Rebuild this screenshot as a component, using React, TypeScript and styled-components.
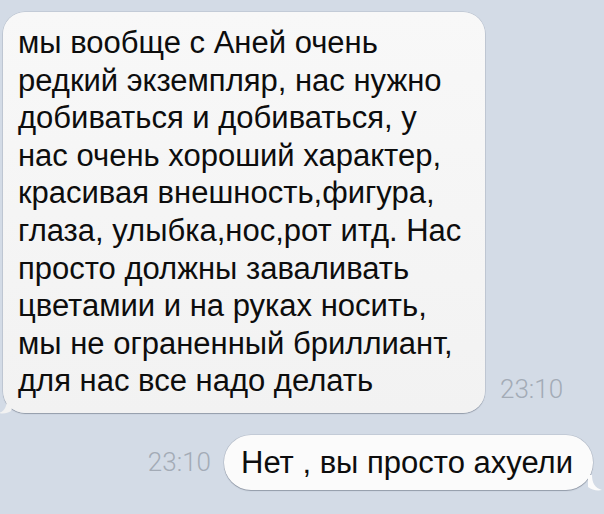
import React from "react";
import styled, { createGlobalStyle } from "styled-components";

const Global = createGlobalStyle`
  html, body { margin: 0; padding: 0; }
  body {
    background: #d3dbe6;
    font-family: "Liberation Sans", Arial, sans-serif;
    width: 604px;
    height: 514px;
    overflow: hidden;
  }
`;

const Thread = styled.div`
  display: flex;
  flex-direction: column;
  padding-top: 12px;
  gap: 22px;
`;

const Row = styled.div<{ $out?: boolean }>`
  display: flex;
  align-items: ${(p) => (p.$out ? "center" : "flex-end")};
  justify-content: ${(p) => (p.$out ? "flex-end" : "flex-start")};
  padding-left: ${(p) => (p.$out ? "0" : "3px")};
  padding-right: ${(p) => (p.$out ? "11px" : "0")};
  gap: ${(p) => (p.$out ? "13px" : "15px")};
`;

const Bubble = styled.div<{ $out?: boolean }>`
  position: relative;
  box-sizing: border-box;
  background: ${(p) => (p.$out ? "#fbfbfb" : "linear-gradient(#f8f8f8, #f2f2f2)")};
  border-radius: ${(p) => (p.$out ? "27px" : "22px")};
  box-shadow: 0 1px 1px rgba(90, 100, 115, 0.45), 0 0 0 0.5px rgba(120, 130, 145, 0.35);
  color: #0d0d0d;
  font-size: 31px;
  line-height: ${(p) => (p.$out ? "37px" : "37.6px")};
  width: ${(p) => (p.$out ? "auto" : "482px")};
  padding: ${(p) => (p.$out ? "9px 20px 9px 17px" : "12px 10px 13px 15px")};
  white-space: nowrap;
`;

const Line = styled.div`
  display: block;
`;

const Time = styled.span<{ $out?: boolean }>`
  font-family: Roboto, "Liberation Sans", sans-serif;
  font-weight: 300;
  font-size: 26px;
  color: #a3abb6;
  margin-bottom: ${(p) => (p.$out ? "0" : "9px")};
`;

const Tail = styled.svg<{ $out?: boolean }>`
  position: absolute;
  bottom: -1px;
  ${(p) => (p.$out ? "right: -11px;" : "left: -4px;")}
  width: 16px;
  height: 16px;
  overflow: visible;
`;

const incoming = [
  "мы вообще с Аней очень",
  "редкий экземпляр, нас нужно",
  "добиваться и добиваться, у",
  "нас очень хороший характер,",
  "красивая внешность,фигура,",
  "глаза, улыбка,нос,рот итд. Нас",
  "просто должны заваливать",
  "цветамии и на руках носить,",
  "мы не ограненный бриллиант,",
  "для нас все надо делать",
];

export default function App() {
  return (
    <>
      <Global />
      <Thread>
        <Row>
          <Bubble>
            {incoming.map((l, i) => (
              <Line key={i}>{l}</Line>
            ))}
            <Tail viewBox="0 0 16 16">
              <path d="M8 0 C8 8 6 13 0 15 C5 16 9 15 12 13 L16 0 Z" fill="#f2f2f2" />
            </Tail>
          </Bubble>
          <Time>23:10</Time>
        </Row>
        <Row $out>
          <Time $out>23:10</Time>
          <Bubble $out>
            Нет , вы просто ахуели
            <Tail $out viewBox="0 0 16 16">
              <path d="M4 0 C4 8 7 13 14 15 C9 16 4 15 0 12 L0 0 Z" fill="#fbfbfb" />
            </Tail>
          </Bubble>
        </Row>
      </Thread>
    </>
  );
}
